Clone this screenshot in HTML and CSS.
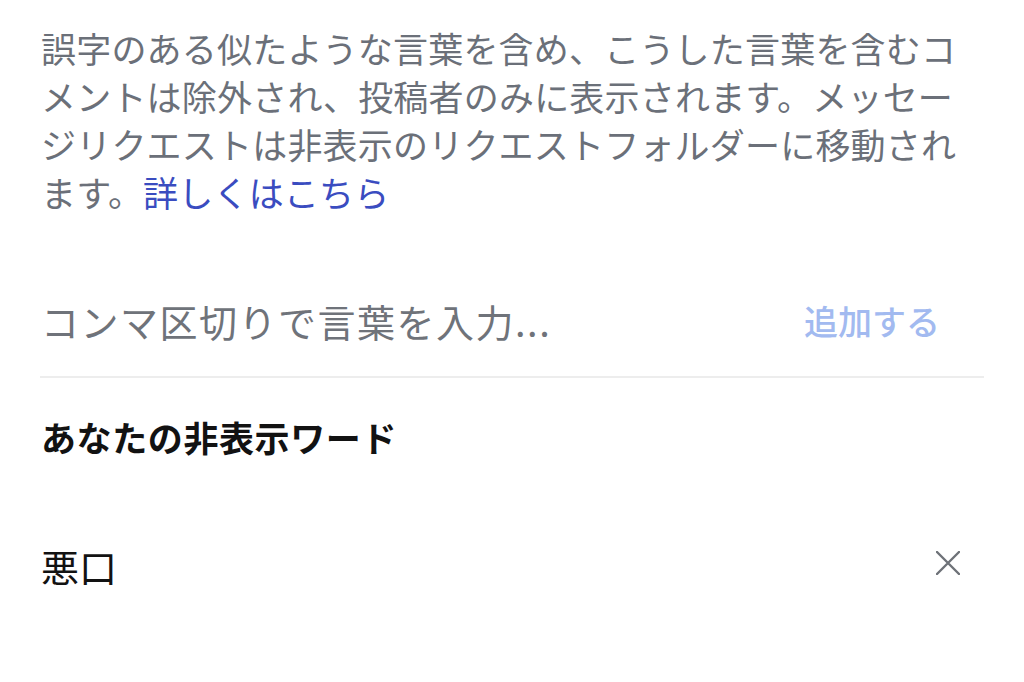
FILE: index.html
```html
<!DOCTYPE html>
<html lang="ja">
<head>
<meta charset="utf-8">
<title>非表示ワード</title>
<link rel="stylesheet" href="styles.css">
</head>
<body>
<main class="page">
  <p class="desc">誤字のある似たような言葉を含め、こうした言葉を含むコメントは除外され、投稿者のみに表示されます。メッセージリクエストは非表示のリクエストフォルダーに移動されます。<a class="link" href="#">詳しくはこちら</a></p>
  <div class="input-row">
    <span class="placeholder">コンマ区切りで言葉を入力...</span>
    <span class="add">追加する</span>
  </div>
  <h2 class="heading">あなたの非表示ワード</h2>
  <div class="word-row">
    <span class="word">悪口</span>
    <svg class="close" width="24" height="24" viewBox="0 0 24 24" aria-hidden="true">
      <path d="M1 1 L23 23 M23 1 L1 23" stroke="#6e7278" stroke-width="2.4" stroke-linecap="round" fill="none"/>
    </svg>
  </div>
</main>
</body>
</html>
```

FILE: styles.css
```css
html, body {
  margin: 0;
  padding: 0;
  background: #ffffff;
}
body {
  font-family: "Noto Sans CJK JP", "Noto Sans", sans-serif;
}
.page {
  padding: 24px 40px 0 40px;
}
.desc {
  margin: 0;
  max-width: 930px;
  font-size: 35px;
  line-height: 48px;
  color: #6b7079;
  padding-left: 1px;
  letter-spacing: 0.2px;
}
.link {
  color: #3a4cc0;
  text-decoration: none;
}
.input-row {
  margin-top: 48px;
  height: 112px;
  display: flex;
  align-items: center;
  justify-content: space-between;
  border-bottom: 2px solid #ededed;
}
.placeholder {
  font-size: 38px;
  letter-spacing: 1.5px;
  color: #6f737a;
  padding-left: 1px;
}
.add {
  font-size: 34px;
  font-weight: 500;
  color: #a2baf0;
  padding-right: 44px;
}
.heading {
  margin: 35px 0 0 0;
  font-size: 35px;
  line-height: 48px;
  font-weight: 700;
  color: #121212;
  padding-left: 1px;
  letter-spacing: 0.6px;
}
.word-row {
  margin-top: 64px;
  height: 80px;
  display: flex;
  align-items: center;
  justify-content: space-between;
}
.word {
  font-size: 38px;
  color: #121212;
  padding-left: 1px;
}
.close {
  margin-right: 24px;
  margin-top: -4px;
}
```
